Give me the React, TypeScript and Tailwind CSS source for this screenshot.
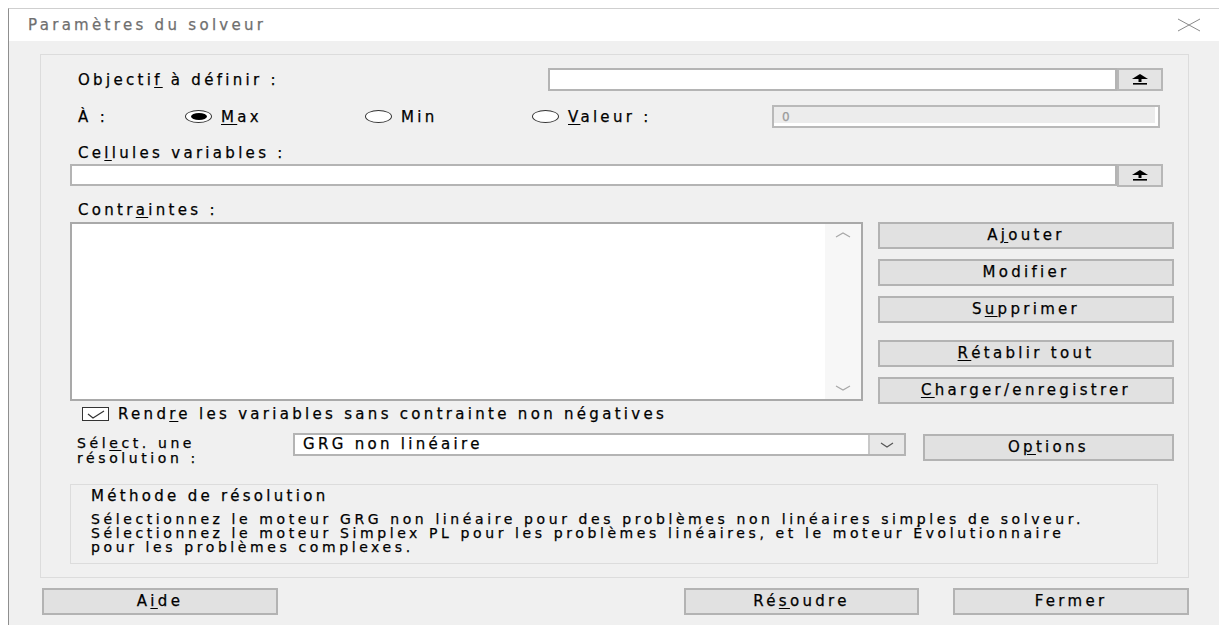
import type { ReactNode } from "react";

const font = { fontFamily: '"DejaVu Sans", Verdana, sans-serif' };

function U({ children }: { children: ReactNode }) {
  return <span className="underline underline-offset-2">{children}</span>;
}

function Button({
  children,
  className = "",
}: {
  children: ReactNode;
  className?: string;
}) {
  return (
    <div
      className={`flex h-[27px] shrink-0 items-center justify-center border-2 border-[#b3b3b3] bg-[#e1e1e1] text-black ${className}`}
    >
      {children}
    </div>
  );
}

function RefButton() {
  return (
    <div className="flex h-[23px] w-[46px] items-center justify-center border-2 border-[#b7b7b7] bg-[#e4e4e4]">
      <svg width="20" height="11" viewBox="0 0 20 11">
        <polygon points="10,0 2,5 18,5" fill="#000" />
        <rect x="8.5" y="4" width="3" height="4" fill="#000" />
        <rect x="3" y="9" width="14" height="1.6" fill="#000" />
      </svg>
    </div>
  );
}

function Radio({ checked = false }: { checked?: boolean }) {
  return (
    <span className="flex h-[13px] w-[27px] items-center justify-center rounded-[50%] border border-[#333] bg-white">
      {checked && <span className="h-[7px] w-[16px] rounded-[50%] bg-black" />}
    </span>
  );
}

function Chevron({ up }: { up?: boolean }) {
  return (
    <svg width="16" height="6" viewBox="0 0 16 6">
      <polyline
        points={up ? "1,5 8,1 15,5" : "1,1 8,5 15,1"}
        fill="none"
        stroke="#a8a8a8"
        strokeWidth="1.2"
      />
    </svg>
  );
}

export default function App() {
  return (
    <div
      className="h-[625px] w-[1219px] overflow-hidden bg-white text-[15px] tracking-[3.3px] text-black [-webkit-text-stroke:0.25px]"
      style={font}
    >
      <div className="ml-[8px] mt-[8px] h-[640px] border-l border-t border-l-[#8f8f8f] border-t-[#cfcfcf]">
        {/* title bar */}
        <div className="flex h-[32px] items-center justify-between bg-white pl-[19px] pr-[18px]">
          <span className="text-[#6f6f6f]">Paramètres du solveur</span>
          <svg width="24" height="14" viewBox="0 0 24 14">
            <path d="M1 1 L23 13 M23 1 L1 13" stroke="#8a8a8a" strokeWidth="1" />
          </svg>
        </div>

        {/* dialog body */}
        <div className="h-full bg-[#f0f0f0] pl-[31px] pt-[13px]">
          <div className="h-[524px] w-[1149px] border border-[#dcdcdc] pl-[29px] pt-[13px]">
            {/* objective */}
            <div className="flex h-[23px] items-center">
              <span className="w-[478px] pl-[8px] pt-[2px]">
                Objecti<U>f</U> à définir :
              </span>
              <div className="h-[23px] w-[569px] border-2 border-[#b4b4b4] bg-white" />
              <RefButton />
            </div>

            {/* to */}
            <div className="mt-[14px] flex h-[23px] items-center">
              <span className="w-[115px] pl-[8px] pt-[1px]">À :</span>
              <div className="flex w-[180px] items-center gap-[9px]">
                <Radio checked />
                <span className="pt-[1px]">
                  <U>M</U>ax
                </span>
              </div>
              <div className="flex w-[167px] items-center gap-[9px]">
                <Radio />
                <span className="pt-[1px]">Min</span>
              </div>
              <div className="flex w-[240px] items-center gap-[9px]">
                <Radio />
                <span className="pt-[1px]">
                  <U>V</U>aleur :
                </span>
              </div>
              <div className="flex h-[23px] w-[388px] items-center border-2 border-[#b9b9b9] bg-[#ececec] pl-[8px] text-[12px] text-[#9a9a9a] shadow-[inset_-3px_-3px_0_#fff]">
                0
              </div>
            </div>

            {/* variable cells */}
            <div className="mt-[13px] flex h-[23px] items-center pl-[8px] pt-[1px]">
              Ce<U>l</U>lules variables :
            </div>
            <div className="flex h-[22px]">
              <div className="h-[22px] w-[1047px] border-2 border-[#b4b4b4] bg-white" />
              <RefButton />
            </div>

            {/* constraints */}
            <div className="mt-[13px] flex h-[23px] items-center pl-[8px]">
              Contr<U>a</U>intes :
            </div>
            <div className="flex h-[179px]">
              <div className="flex h-[179px] w-[793px] border-2 border-[#a9a9a9] bg-white">
                <div className="flex-1" />
                <div className="flex w-[36px] flex-col items-center justify-between bg-[#f7f7f7] py-[8px]">
                  <Chevron up />
                  <Chevron />
                </div>
              </div>
              <div className="ml-[15px] flex w-[296px] flex-col">
                <Button>
                  A<U>j</U>outer
                </Button>
                <Button className="mt-[10px]">Modifier</Button>
                <Button className="mt-[10px]">
                  S<U>u</U>pprimer
                </Button>
                <Button className="mt-[17px]">
                  <U>R</U>établir tout
                </Button>
                <Button className="mt-[10px]">
                  <U>C</U>harger/enregistrer
                </Button>
              </div>
            </div>

            {/* non-negative */}
            <div className="flex h-[26px] items-center pl-[12px]">
              <span className="flex h-[14px] w-[27px] shrink-0 items-center justify-center border border-[#333] bg-white">
                <svg width="18" height="9" viewBox="0 0 18 9">
                  <polyline points="1,4 6,8 17,1" fill="none" stroke="#333" strokeWidth="1.2" />
                </svg>
              </span>
              <span className="ml-[9px] pt-[1px]">
                Rend<U>r</U>e les variables sans contrainte non négatives
              </span>
            </div>

            {/* engine */}
            <div className="flex items-start pt-[6px]">
              <div className="mt-[3px] w-[223px] pl-[7px] text-[14px] leading-[15px] tracking-[3.6px]">
                Sél<U>e</U>ct. une
                <br />
                résolution :
              </div>
              <div className="flex h-[23px] w-[613px] items-center border-2 border-[#b4b4b4] bg-white">
                <span className="flex-1 pl-[8px]">GRG non linéaire</span>
                <div className="flex h-full w-[36px] items-center justify-center border-l-2 border-[#c8c8c8] bg-[#e8e8e8]">
                  <svg width="14" height="6" viewBox="0 0 14 6">
                    <polyline points="1,1 7,5 13,1" fill="none" stroke="#555" strokeWidth="1.2" />
                  </svg>
                </div>
              </div>
              <Button className="ml-[17px] mt-[1px] w-[251px]">
                O<U>p</U>tions
              </Button>
            </div>

            {/* method description */}
            <div className="mt-[18px] h-[80px] w-[1088px] border border-[#dcdcdc] pl-[20px] pt-[3px]">
              <div className="leading-[16px]">Méthode de résolution</div>
              <div className="mt-[8px] text-[14px] leading-[14px] tracking-[3.6px]">
                Sélectionnez le moteur GRG non linéaire pour des problèmes non linéaires simples de solveur.
                <br />
                Sélectionnez le moteur Simplex PL pour les problèmes linéaires, et le moteur Évolutionnaire
                <br />
                pour les problèmes complexes.
              </div>
            </div>
          </div>

          {/* footer */}
          <div className="mt-[10px] flex">
            <Button className="ml-[2px] w-[236px]">
              A<U>i</U>de
            </Button>
            <Button className="ml-[406px] w-[235px] border-[#0078d7]">
              Ré<U>s</U>oudre
            </Button>
            <Button className="ml-[34px] w-[236px]">Fermer</Button>
          </div>
        </div>
      </div>
    </div>
  );
}
